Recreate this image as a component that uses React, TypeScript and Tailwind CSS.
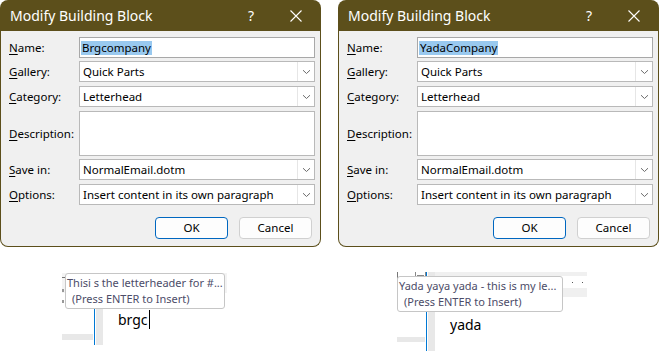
import React from "react";

const font = { fontFamily: '"Noto Sans", "Open Sans", sans-serif' };

function Label({ text, u }: { text: string; u: number }) {
  return (
    <span className="whitespace-nowrap text-[11.5px] leading-none text-black">
      {text.slice(0, u)}
      <span className="underline underline-offset-2">{text[u]}</span>
      {text.slice(u + 1)}
    </span>
  );
}

function Chevron() {
  return (
    <svg width="9" height="6" viewBox="0 0 9 6" className="block">
      <path d="M1 1.2 L4.5 4.5 L8 1.2" fill="none" stroke="#6b6b6b" strokeWidth="1" />
    </svg>
  );
}

function Select({ value }: { value: string }) {
  return (
    <div className="flex h-[21px] w-[236px] items-center border border-[#b9b9b9] bg-white">
      <span className="flex-1 whitespace-nowrap pl-[3px] text-[11.5px] leading-none text-black">{value}</span>
      <div className="flex h-[19px] w-[17px] items-center justify-center border-l border-[#e6e6e6] bg-white">
        <Chevron />
      </div>
    </div>
  );
}

function Row({ label, u, children, className = "" }: { label: string; u: number; children: React.ReactNode; className?: string }) {
  return (
    <div className={"flex items-center leading-none " + className}>
      <div className="flex w-[78px] items-center pl-[8px] leading-none">
        <Label text={label} u={u} />
      </div>
      {children}
    </div>
  );
}

function Dialog({ name }: { name: string }) {
  return (
    <div className="flex w-[321px] flex-col" style={font}>
      <div className="flex h-[31px] items-center rounded-t-[8px] bg-[#5c4f1b] pl-[10px] pr-[19px] text-white">
        <span className="flex-1 text-[14px] leading-none">Modify Building Block</span>
        <span className="mr-[36px] text-[14px] leading-none">?</span>
        <svg width="12" height="12" viewBox="0 0 12 12">
          <path d="M0.5 0.5 L11.5 11.5 M11.5 0.5 L0.5 11.5" stroke="#ffffff" strokeWidth="1.1" />
        </svg>
      </div>
      <div className="flex h-[216px] flex-col rounded-b-[8px] border border-t-0 border-[#5c4f1b] bg-[#f0f0f0] pt-[6px]">
        <Row label="Name:" u={0}>
          <div className="flex h-[21px] w-[236px] items-center border border-[#a8a8a8] bg-white pl-[1px]">
            <span className="bg-[#99c9ef] px-[1px] text-[11.5px] leading-[14px] text-black">{name}</span>
          </div>
        </Row>
        <Row label="Gallery:" u={0} className="mt-[3px]">
          <Select value="Quick Parts" />
        </Row>
        <Row label="Category:" u={0} className="mt-[4px]">
          <Select value="Letterhead" />
        </Row>
        <Row label="Description:" u={0} className="mt-[4px]">
          <div className="h-[45px] w-[236px] border border-[#b9b9b9] bg-white" />
        </Row>
        <Row label="Save in:" u={0} className="mt-[3px]">
          <Select value="NormalEmail.dotm" />
        </Row>
        <Row label="Options:" u={0} className="mt-[4px]">
          <Select value="Insert content in its own paragraph" />
        </Row>
        <div className="mt-[12px] flex justify-end gap-[11px] pr-[8px]">
          <button className="flex h-[22px] w-[73px] items-center justify-center rounded-[4px] border border-[#0067c0] bg-[#fdfdfd] text-[11.5px] leading-none text-black">
            OK
          </button>
          <button className="flex h-[22px] w-[73px] items-center justify-center rounded-[4px] border border-[#d0d0d0] bg-[#fdfdfd] text-[11.5px] leading-none text-black">
            Cancel
          </button>
        </div>
      </div>
    </div>
  );
}

function Tooltip({ line1, w }: { line1: string; w: string }) {
  return (
    <div className={"whitespace-nowrap rounded-[3px] border border-[#c6c6c6] bg-white pb-[1px] pl-[1px] pt-[1px] text-[11px] leading-[16px] text-[#4c4c68] " + w} style={font}>
      <div>{line1}</div>
      <div className="pl-[5px]">(Press ENTER to Insert)</div>
    </div>
  );
}

function LeftSnippet() {
  return (
    <div className="relative h-[104px] w-[330px]" style={font}>
      <div className="absolute left-[62px] top-[26px] h-[20px] w-[165px] bg-[#f3f3f3]" />
      <div className="absolute left-[62px] top-[30px] h-[1px] w-[3px] bg-[#777]" />
      <div className="absolute left-[62px] top-[42px] h-[3px] w-[2px] bg-[#999]" />
      <div className="absolute left-[62px] top-[53px] h-[3px] w-[2px] bg-[#999]" />
      <div className="absolute left-[94px] top-[58px] h-[40px] w-[1px] bg-[#0078d4]" />
      <div className="absolute left-[96px] top-[58px] h-[40px] w-[7px] bg-[#e8e8e8]" />
      <div className="absolute left-[62px] top-[87px] h-[6px] w-[31px] bg-[#e8e8e8]" />
      <div className="absolute left-[118px] top-[63px] flex items-center text-[14px] leading-[18px] text-black">
        <span>brgc</span>
        <span className="ml-[1px] inline-block h-[19px] w-[1px] bg-black" />
      </div>
      <div className="absolute left-[65px] top-[26px]">
        <Tooltip line1="Thisi s the letterheader for #..." w="w-[160px]" />
      </div>
    </div>
  );
}

function RightSnippet() {
  return (
    <div className="relative h-[104px] w-[321px]" style={font}>
      <div className="absolute left-[97px] top-[25px] h-[4px] w-[152px] bg-[#f0f0f0]" />
      <div className="absolute left-[97px] top-[41px] h-[9px] w-[152px] bg-[#f0f0f0]" />
      <div className="absolute left-[234px] top-[35px] h-[1px] w-[1px] bg-[#555]" />
      <div className="absolute left-[244px] top-[35px] h-[1px] w-[1px] bg-[#555]" />
      <div className="absolute left-[59px] top-[25px] h-[10px] w-[1px] bg-[#777]" />
      <div className="absolute left-[77px] top-[25px] h-[8px] w-[11px] border border-t-0 border-[#888]" />
      <div className="absolute left-[79px] top-[28px] h-[1px] w-[7px] bg-[#888]" />
      <div className="absolute left-[88px] top-[25px] h-[79px] w-[1px] bg-[#0078d4]" />
      <div className="absolute left-[90px] top-[25px] h-[79px] w-[7px] bg-[#e8e8e8]" />
      <div className="absolute left-[59px] top-[90px] h-[5px] w-[28px] bg-[#e8e8e8]" />
      <div className="absolute left-[112px] top-[69px] text-[14px] leading-[18px] text-black">yada</div>
      <div className="absolute left-[59px] top-[29px]">
        <Tooltip line1="Yada yaya yada - this is my le..." w="w-[166px]" />
      </div>
    </div>
  );
}

export default function App() {
  return (
    <div className="h-[351px] w-[659px] overflow-hidden bg-white">
      <div className="flex gap-[17px]">
        <Dialog name="Brgcompany" />
        <Dialog name="YadaCompany" />
      </div>
      <div className="flex gap-[8px]">
        <LeftSnippet />
        <RightSnippet />
      </div>
    </div>
  );
}
